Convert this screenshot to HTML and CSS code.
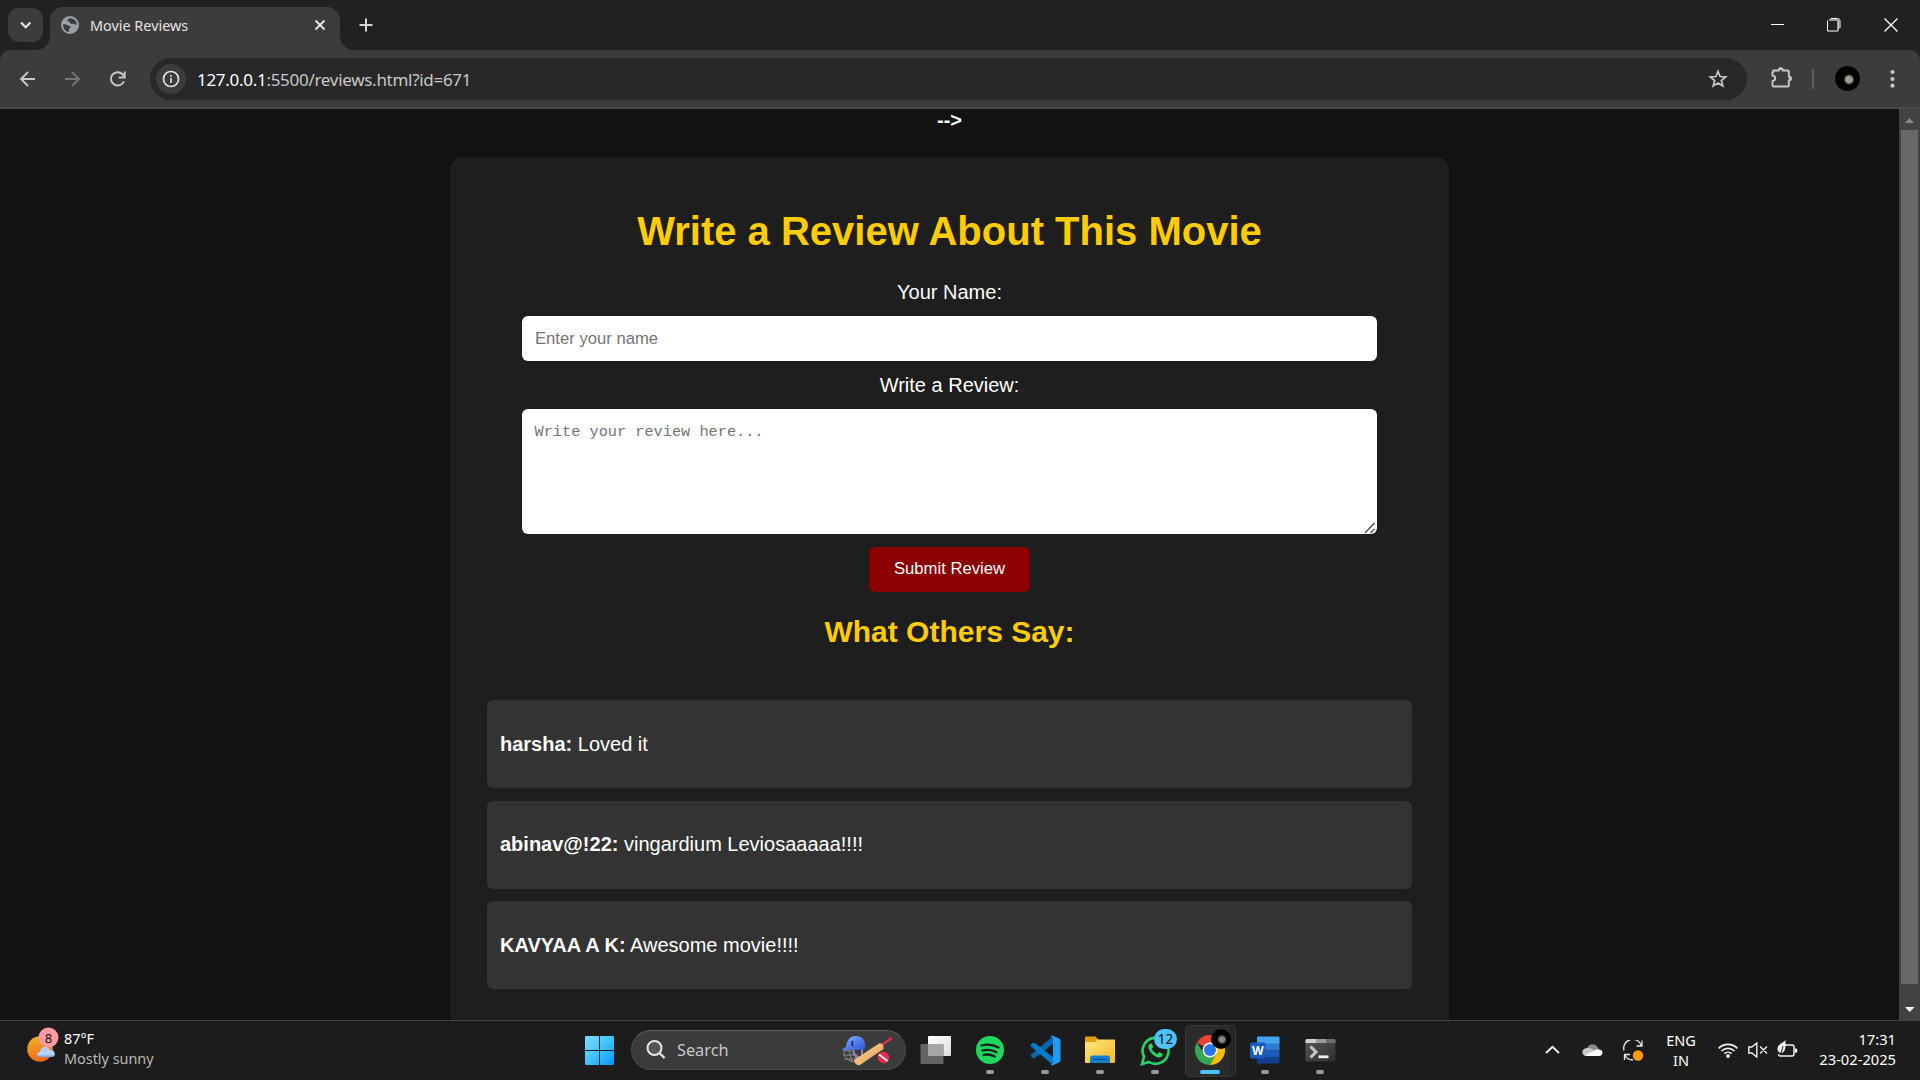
FILE: index.html
```html
<!DOCTYPE html>
<html lang="en">
<head>
<meta charset="utf-8">
<title>Movie Reviews</title>
<link rel="stylesheet" href="styles.css">
</head>
<body>
<header class="tabstrip">
  <div class="tab-search"><svg width="35" height="34"><path d="M13 14.5l4.7 4.7 4.7-4.7" fill="none" stroke="#e3e3e3" stroke-width="2.2"/></svg></div>
  <div class="tab">
    <svg width="18" height="18" viewBox="0 0 18 18"><circle cx="9" cy="9" r="9" fill="#9aa0a6"/><path d="M2 8.200c2 .2 3.500 0 5 1.200 1 .9 2.600.3 2.800 1.600.2 1-1.800 1-1.800 2.200v2.800C5 15.700 2 13 2 8.200zM8.600 2.200C7.500 3 6 3.500 6.600 5c.4 1 2 .3 2.400 1.300.4 1 .4 1.700 1.700 1.600 1.500-.1 2-.5 3 .2.8.6 1.400 1.300 2 1.200.6-3.500-2.500-7.300-7.100-7.100z" fill="#3c3c3c"/></svg>
    <span class="tab-title">Movie Reviews</span>
    <svg class="tab-close" width="12" height="12"><path d="M1.500 1.500l9 9m0-9l-9 9" stroke="#e3e3e3" stroke-width="1.900"/></svg>
  </div>
  <svg class="new-tab" width="14" height="14"><path d="M7 .5v13M.5 7h13" stroke="#d5d5d5" stroke-width="2"/></svg>
  <div class="window-buttons">
    <svg width="13" height="14"><path d="M0 6.500h13" stroke="#fff"/></svg>
    <svg width="14" height="14"><path d="M3.500 .5h7q2.500 0 2.500 2.500v7" fill="none" stroke="#fff"/><path d="M2 2h9.500v9" fill="none" stroke="#999" stroke-width="2"/><rect x=".5" y="3" width="10" height="10" fill="#202221"/><path d="M.5 2.500v10.500h10.500V3" fill="none" stroke="#fff"/></svg>
    <svg width="14" height="14"><path d="M.5.500l13 13m0-13l-13 13" stroke="#fff" stroke-width="1.300"/></svg>
  </div>
</header>

<nav class="toolbar">
  <svg class="nav-icon" width="45" height="42"><path d="M35 21H21.500M28 14l-7 7 7 7" fill="none" stroke="#c7c7c7" stroke-width="1.900"/></svg>
  <svg class="nav-icon" width="45" height="42"><path d="M20 21h13.500M27 14l7 7-7 7" fill="none" stroke="#777" stroke-width="1.900"/></svg>
  <svg class="nav-icon" width="45" height="42"><path d="M33.900 23.300A6.700 6.700 0 1 1 32.300 16l2 2.200M34.700 13.500v6h-6" fill="none" stroke="#c7c7c7" stroke-width="2"/></svg>
  <div class="omnibox">
    <div class="site-info"><svg width="18" height="18"><circle cx="9" cy="9" r="7.500" fill="none" stroke="#dfdfdf" stroke-width="1.700"/><path d="M9 8v5M9 5v1.800" stroke="#dfdfdf" stroke-width="1.700"/></svg></div>
    <span class="url"><span class="host">127.0.0.1</span>:5500/reviews.html?id=671</span>
    <svg class="star" width="20" height="20"><path d="M10 2.300l2.100 5.200 5.600.4-4.300 3.600 1.400 5.500L10 14l-4.800 3 1.400-5.500-4.300-3.600 5.600-.4z" fill="none" stroke="#c7c7c7" stroke-width="1.700"/></svg>
  </div>
  <svg class="puzzle" width="23" height="23"><path d="M3.500 4.500h5.300a2 2 0 0 1 4 0h5q1 0 1 1v5a2 2 0 0 1 0 4v5q0 1-1 1H3.500q-1 0-1-1v-4.500c3.600-.5 3.600-5 0-5.500v-3q0-1 1-1z" fill="none" stroke="#c7c7c7" stroke-width="1.900"/><path d="M8 4a2.700 2.700 0 0 1 5.400 0M19 9.700a2.700 2.700 0 0 1 0 5.400" fill="#c7c7c7"/></svg>
  <span class="divider"></span>
  <span class="avatar"></span>
  <svg class="menu-dots" width="5" height="20" fill="#c7c7c7"><circle cx="2.500" cy="3" r="2.100"/><circle cx="2.500" cy="10" r="2.100"/><circle cx="2.500" cy="16.700" r="2.100"/></svg>
</nav>

<div class="viewport">
  <main class="page">
    <div class="stray">--&gt;</div>
    <section class="panel">
      <h1>Write a Review About This Movie</h1>
      <form class="review-form">
        <label for="name">Your Name:</label>
        <input id="name" type="text" placeholder="Enter your name">
        <label for="review">Write a Review:</label>
        <div class="textarea-wrap">
          <textarea id="review" placeholder="Write your review here..."></textarea>
          <svg class="grip" width="12" height="12"><path d="M1 11L10.500 1M6.500 11l4-4" stroke="#555" stroke-width="1.500"/></svg>
        </div>
        <button type="button">Submit Review</button>
      </form>
      <h2>What Others Say:</h2>
      <div class="reviews">
        <p class="review"><strong>harsha:</strong> Loved it</p>
        <p class="review"><strong>abinav@!22:</strong> vingardium Leviosaaaaa!!!!</p>
        <p class="review"><strong>KAVYAA A K:</strong> Awesome movie!!!!</p>
      </div>
    </section>
  </main>
  <div class="scrollbar">
    <svg width="21" height="21"><path d="M6 14l4.500-5 4.500 5z" fill="#868686"/></svg>
    <div class="thumb"></div>
    <svg width="21" height="21"><path d="M6 8h9.500l-4.750 5z" fill="#fff"/></svg>
  </div>
</div>

<footer class="taskbar">
  <div class="weather">
    <svg width="34" height="40" viewBox="0 0 34 40">
      <defs><linearGradient id="sun" x1="0" y1="0" x2=".3" y2="1"><stop offset="0" stop-color="#f2b42e"/><stop offset="1" stop-color="#f26b12"/></linearGradient>
      <linearGradient id="cloud" x1="0" y1="0" x2="0" y2="1"><stop offset="0" stop-color="#a9c8fa"/><stop offset=".7" stop-color="#b9d6ff"/><stop offset="1" stop-color="#6e9df0"/></linearGradient></defs>
      <circle cx="14" cy="23" r="12.800" fill="url(#sun)"/><path d="M14 31c-3.500 0-4-5 0-5 .5-6 8-7 10-2 5-1 7 7 2 7z" fill="url(#cloud)"/><circle cx="22.500" cy="11.500" r="10" fill="#ff99a4"/>
      <text x="22.500" y="16.500" text-anchor="middle" class="badge-text">8</text>
    </svg>
    <div class="weather-text"><span class="temp">87°F</span><span class="cond">Mostly sunny</span></div>
  </div>

  <svg class="start" width="29" height="29"><defs><linearGradient id="win" gradientUnits="userSpaceOnUse" x1="0" y1="0" x2="29" y2="29"><stop offset="0" stop-color="#7fdcff"/><stop offset=".5" stop-color="#3fc4fb"/><stop offset="1" stop-color="#0a93f5"/></linearGradient></defs><path d="M1 0h13v14H0V1q0-1 1-1zM15 0h13q1 0 1 1v13H15zM0 15h14v14H1q-1 0-1-1zM15 15h14v13q0 1-1 1H15z" fill="url(#win)"/></svg>

  <div class="search">
    <svg width="20" height="20"><circle cx="8.500" cy="8" r="7" fill="#555" stroke="#e6e6e6" stroke-width="2"/><path d="M13.500 13l5 5.200" stroke="#ddd" stroke-width="2.400"/></svg>
    <span class="search-label">Search</span>
    <svg class="cricket" width="51" height="32" viewBox="0 0 51 32">
      <defs><linearGradient id="hel" x1="0" y1="0" x2="1" y2="1"><stop offset="0" stop-color="#9dbcff"/><stop offset=".5" stop-color="#5580f0"/><stop offset="1" stop-color="#2c55dd"/></linearGradient><linearGradient id="bat" x1="0" y1="0" x2="1" y2="1"><stop offset="0" stop-color="#ffd79b"/><stop offset="1" stop-color="#e29a4c"/></linearGradient></defs>
      <path d="M3 16c-1 7 4 12 13 12M2 21h15M3 25h14M8 16l3 12M13 17l3 11M4 17l7-1" fill="none" stroke="#8b8b93" stroke-width="1"/>
      <path d="M12 15c0 6 3 9 9 9V13" fill="none" stroke="#8c86bd" stroke-width="2"/>
      <path d="M1 16c1-2 3-2 4-3C6 5 10 2 15 2c7 0 10 5 9 13l-7 1-9-.5C5 15.500 3 17 1 16z" fill="url(#hel)"/><path d="M12 7q-2 2 0 5" stroke="#202040" stroke-width="1.500" fill="none"/>
      <path d="M42 10l8-5.500" stroke="#d93248" stroke-width="2.600" stroke-linecap="round"/>
      <path d="M13 26L38 9.500q3-1 4.500 2.500v3L19 31q-5 1-6-5z" fill="url(#bat)"/>
      <circle cx="42.500" cy="23.500" r="5.700" fill="#ee2849"/><path d="M38 20.500l8.500 6.500" stroke="#ffe9ee" stroke-width="2.200"/>
    </svg>
  </div>

  <div class="apps">
    <div class="app"><svg width="31" height="30"><defs><linearGradient id="tv" x1="0" y1="0" x2="1" y2="1"><stop offset="0" stop-color="#fff"/><stop offset="1" stop-color="#ddd"/></linearGradient></defs><rect x="8" y="1" width="23" height="20" rx="1" fill="url(#tv)"/><rect x=".5" y="9" width="23" height="20" rx="1" fill="#777" fill-opacity=".8"/><path d="M8 9h15.500v12H8z" fill="#a5a5a5"/></svg></div>
    <div class="app"><svg width="30" height="30"><circle cx="15" cy="15" r="14" fill="#1ed760"/><path d="M6.500 10.500q9-2.500 17 2M7.500 15.500q7.500-2 14 1.700M8.500 20q6-1.500 11.200 1.500" fill="none" stroke="#1c1c1c" stroke-width="2.300" stroke-linecap="round"/></svg><i class="run"></i></div>
    <div class="app"><svg width="31" height="31" viewBox="0 0 31 31"><path d="M1 19.500q-1 1 0 2l1.800 1.600q1 .5 2 0L23 9V1z" fill="#0065a9"/><path d="M1 9.500l1.800-1.600q1-.5 2 0L23 22v8L1 11.500q-1-1 0-2z" fill="#007acc"/><path d="M22.500.600q-1.500.4-2.500 1.400 3-1 3 2v23q0 3-3 2 1 1 2.500 1.400L29 27.500q1.500-.7 1.500-2.300V5.800q0-1.600-1.500-2.300z" fill="#1f9cf0"/></svg><i class="run"></i></div>
    <div class="app"><svg width="31" height="28"><defs><linearGradient id="fold" x1="0" y1="0" x2="1" y2="1"><stop offset="0" stop-color="#ffe489"/><stop offset="1" stop-color="#fbb91d"/></linearGradient></defs><path d="M0 10V1.500Q0 .500 1 .500h9.500L14 4h14v6z" fill="#e0a008"/><path d="M0 6h10l3-2.500h16.500q.5 0 .5 1V26q0 1-1 1H1q-1 0-1-1z" fill="url(#fold)"/><path d="M5 27v-5q0-2.500 2.500-2.500h15Q25 19.500 25 22v5z" fill="#1280d0"/><path d="M8.500 23.300h13" stroke="#0b4d84" stroke-width="1.300" stroke-linecap="round"/></svg><i class="run"></i></div>
    <div class="app"><svg width="31" height="31"><path d="M2 29l2-7.300A13 13 0 1 1 9 27z" fill="none" stroke="#25d366" stroke-width="2.600"/><path d="M10.500 8.500q-3 1.500-2 5 2.500 6.500 9.500 9 4 .5 5-3.500l-3.800-2-1.900 2.200q-3.800-1.600-5.600-5.200l1.600-2-1.500-3.500z" fill="#25d366"/></svg><b class="count">12</b><i class="run"></i></div>
    <div class="app active"><svg width="30" height="30" viewBox="-15 -15 30 30"><path d="M0 0L-13-7.500A15 15 0 0 1 13-7.500H0z" fill="#ea4335"/><path d="M-13-7.500A15 15 0 0 0 0 15L6.500 3.700-6.500 3.700z" fill="#34a853"/><path d="M13-7.500A15 15 0 0 1 0 15L6.500 3.700 0-7.500z" fill="#fbbc05"/><circle r="7.500" fill="#fff"/><circle r="6" fill="#2c75e8"/></svg><span class="profile"></span><i class="run wide"></i></div>
    <div class="app"><svg width="30" height="28"><path d="M8 .5h20q1.500 0 1.500 1V8H7V1.500q0-1 1-1z" fill="#41a5ee"/><path d="M7 7.500h22.500v7H7z" fill="#2b7cd3"/><path d="M7 14.500h22.500v7H7z" fill="#185abd"/><path d="M7 21.500h22.500v5q0 1-1 1H8q-1 0-1-1z" fill="#103f91"/><rect x="0" y="6.500" width="15.500" height="16" rx="1.500" fill="#185abd"/><text x="7.750" y="18.800" text-anchor="middle" class="word-letter">W</text></svg><i class="run"></i></div>
    <div class="app"><svg width="31" height="24"><defs><linearGradient id="term" x1="0" y1="0" x2="1" y2="1"><stop offset="0" stop-color="#585858"/><stop offset="1" stop-color="#2f2f2f"/></linearGradient></defs><rect x=".5" y="1" width="30" height="22.500" rx="1.500" fill="url(#term)"/><path d="M2 1h9v4H.500V2.500Q.5 1 2 1z" fill="#d0d0d0"/><path d="M11 1h10v4H11z" fill="#9b9b9b"/><path d="M21 1h8q1.500 0 1.500 1.500V5H21z" fill="#6d6d6d"/><path d="M5.500 8.500L11 14l-5.500 5.500" fill="none" stroke="#c6c6c6" stroke-width="3"/><path d="M13.500 18.800h10" stroke="#eee" stroke-width="2.800"/></svg><i class="run"></i></div>
  </div>

  <div class="tray">
    <svg width="15" height="10"><path d="M1 8l6.500-6.300L14 8" fill="none" stroke="#f2f2f2" stroke-width="1.900"/></svg>
    <svg class="onedrive" width="21" height="14"><path d="M5 6c1-5 8-7 11-1l2 3-8 3z" fill="#8b8b8b"/><path d="M4.500 13C-1 13-1.200 5.500 5 5q5-.5 7 3l-5 5z" fill="#c9c9c9"/><path d="M3 12.200L14 6.500c5-.5 7 1 6.300 4Q19.500 13 17 13H4.500z" fill="#fff"/></svg>
    <svg class="sync" width="21" height="21"><path d="M1 10.500A9 9 0 0 1 18.500 6M19 .500V6h-5.500M1.500 20v-5.500H7M2 15q2 5 8 5" fill="none" stroke="#e8e8e8" stroke-width="1.300"/><circle cx="15" cy="15.500" r="5.200" fill="#ff9a0a"/></svg>
    <div class="lang"><span>ENG</span><span>IN</span></div>
    <svg class="wifi" width="20" height="16"><path d="M.7 6.300a13 13 0 0 1 18.600 0M3.600 9a9 9 0 0 1 12.800 0M6.400 11.700a5.200 5.200 0 0 1 7.200 0" fill="none" stroke="#f2f2f2" stroke-width="1.700"/><circle cx="10" cy="14" r="1.900" fill="#f2f2f2"/></svg>
    <svg class="mute" width="20" height="16"><path d="M.8 5h3l5-4v14l-5-4h-3zM12 4.500l7 7m0-7l-7 7" fill="none" stroke="#f2f2f2" stroke-width="1.400"/></svg>
    <svg class="battery" width="21" height="18"><path d="M8 5h7q2 0 2 2v7q0 2-2 2H3.500q-1.800 0-2-2" fill="none" stroke="#f2f2f2" stroke-width="1.500"/><path d="M18 8.500h1q1.200 0 1.200 1.200v1.800q0 1.200-1.200 1.200h-1z" fill="#f2f2f2"/><path d="M8.500 0C9 8 8 13 4 13q-4-.5-3.500-4.500C1 4 5 4 8.500 0z" fill="#f2f2f2"/><path d="M6 6q-1 5-3 9" stroke="#1c1c1c" fill="none"/></svg>
    <div class="clock"><span>17:31</span><span class="date">23-02-2025</span></div>
  </div>
</footer>
</body>
</html>
```
FILE: styles.css
```css
* { box-sizing: border-box; }
body {
  margin: 0;
  width: 1920px;
  height: 1080px;
  overflow: hidden;
  display: flex;
  flex-direction: column;
  background: #202221;
  font-family: "Noto Sans", "Open Sans", sans-serif;
  color: #fff;
}
svg { display: block; flex: none; }

/* Browser tab strip */
.tabstrip { height: 50px; flex: none; display: flex; align-items: center; padding-left: 8px; }
.tab-search { width: 35px; height: 34px; border-radius: 11px; background: #3c3c3c; }
.tab {
  position: relative;
  align-self: flex-end;
  width: 290px;
  height: 43px;
  margin-left: 7px;
  padding: 0 14px 7px 11px;
  display: flex;
  align-items: center;
  background: #3c3c3c;
  border-radius: 13px 13px 0 0;
}
.tab::before, .tab::after { content: ""; position: absolute; bottom: 0; width: 13px; height: 13px; }
.tab::before { left: -13px; background: radial-gradient(circle at 0 0, transparent 12.5px, #3c3c3c 13px); }
.tab::after { right: -13px; background: radial-gradient(circle at 100% 0, transparent 12.5px, #3c3c3c 13px); }
.tab-title { margin-left: 11px; font-size: 14.4px; color: #e3e3e3; white-space: nowrap; }
.tab-close { margin-left: auto; }
.new-tab { margin-left: 19px; }
.window-buttons { margin: -1px 22px 0 auto; display: flex; gap: 43px; }

/* Toolbar */
.toolbar {
  height: 59px;
  flex: none;
  display: flex;
  align-items: center;
  background: #3c3c3c;
  border-bottom: 2px solid #4a4a4a;
  border-radius: 10px 10px 0 0;
}
.omnibox {
  width: 1597px;
  height: 42px;
  margin-left: 15px;
  padding: 0 19px 0 6px;
  display: flex;
  align-items: center;
  background: #282828;
  border-radius: 21px;
}
.site-info { width: 30px; height: 30px; border-radius: 50%; background: #3c3c3c; display: grid; place-items: center; }
.url { margin: 1px 0 0 11px; font-size: 17px; letter-spacing: -.29px; color: #c7c7c7; white-space: nowrap; }
.host { color: #fff; }
.star { margin-left: auto; }
.puzzle { margin-left: 23px; margin-top: -2px; }
.divider { width: 2px; height: 20px; margin-left: 19px; background: #5c5c5c; }
.avatar { width: 25px; height: 25px; margin-left: 21px; border-radius: 50%; background: radial-gradient(circle at 14px 13.5px, #a39a90 0 3px, #6b645c 4px, #000 5.500px); }
.menu-dots { margin-left: 29.500px; }

/* Page area */
.viewport { flex: 1; min-height: 0; display: flex; background: #121212; }
.page { flex: 1; height: 911px; overflow: hidden; font-family: "Liberation Sans", Arial, sans-serif; font-size: 20px; line-height: 23px; text-align: center; }
.stray { font-weight: 700; }
.panel { width: 999px; height: 900px; margin: 25px auto 0; padding: 51px 37px 0; background: #1e1e1e; border-radius: 12.500px; }
h1 { margin: 0; font-size: 40px; line-height: 46px; color: #fc0; }
.review-form { display: flex; flex-direction: column; align-items: center; padding: 27px 35px 0; }
.review-form label { height: 23px; }
.review-form input {
  width: 100%;
  height: 45px;
  margin: 12px 0 13px;
  padding: 0 13px;
  border: 0;
  border-radius: 6px;
  background: #fff;
  font: 16.670px "Liberation Sans", Arial, sans-serif;
}
::placeholder { color: #757575; }
.textarea-wrap { position: relative; width: 100%; height: 125px; margin: 12px 0 13px; }
.review-form textarea {
  display: block;
  width: 100%;
  height: 100%;
  padding: 13px 12.500px;
  border: 0;
  border-radius: 6px;
  resize: none;
  background: #fff;
  font: 15.270px/20px "Liberation Mono", monospace;
}
.grip { position: absolute; right: 1px; bottom: 0; }
.review-form button {
  width: 161px;
  height: 45px;
  padding: 0 0 2px;
  border: 0;
  border-radius: 6px;
  background: #8b0000;
  color: #fff;
  font: 16.670px "Liberation Sans", Arial, sans-serif;
}
h2 { margin: 23px 0 0; font-size: 30px; line-height: 34px; color: #fc0; }
.reviews { padding-top: 51px; display: flex; flex-direction: column; gap: 12.500px; }
.review { margin: 0; height: 88px; padding: 32.500px 13px; border-radius: 6px; background: #333; text-align: left; }
.scrollbar { width: 21px; height: 911px; background: #424242; display: flex; flex-direction: column; justify-content: space-between; align-items: center; }
.thumb { width: 17px; height: 854px; margin: 0 0 auto; background: #686868; }

/* Taskbar */
.taskbar { height: 60px; flex: none; display: flex; align-items: center; background: #1c1c1c; border-top: 1px solid #424242; padding-bottom: 1px; font-size: 15px; }
.weather { width: 559px; padding-left: 26px; display: flex; align-items: flex-start; height: 58px; padding-top: 5px; }
.badge-text { font-size: 13px; fill: #111; }
.weather-text { display: flex; flex-direction: column; margin: 3px 0 0 4px; line-height: 20px; font-size: 14.400px; }
.cond { color: #b8b8b8; }
.start { margin-left: 26px; }
.search { width: 275px; height: 40px; margin-left: 17px; padding: 0 14px; display: flex; align-items: center; border-radius: 20px; background: #3b3b3b; border: 1px solid #494949; border-top-color: #626262; }
.search-label { margin-left: 11px; font-size: 16.300px; color: #c9c9c9; }
.cricket { margin-left: auto; margin-right: -1px; }
.apps { display: flex; margin-left: 2px; }
.app { position: relative; width: 55px; height: 50px; display: flex; align-items: center; justify-content: center; }
.apps .app > svg { margin-left: -1px; }
.active::before { content: ""; position: absolute; left: 2px; top: 0; width: 45px; height: 50px; border: 1px solid #383838; border-radius: 5px; background: #2b2b2b; }
.active::after { content: ""; position: absolute; left: 40px; top: 0; width: 12px; height: 50px; border: 1px solid #383838; border-left: 0; border-radius: 0 5px 5px 0; background: #252525; clip-path: inset(0 0 0 7px); }
.active svg { position: relative; }
.run { position: absolute; left: 23px; bottom: 1px; width: 8px; height: 4px; border-radius: 2px; background: #9a9a9a; }
.run.wide { left: 17px; width: 20px; background: #4cc2ff; }
.count { position: absolute; left: 26px; top: 4px; width: 23px; height: 20px; border-radius: 10px; background: #4cc2ff; color: #111; font-size: 13.500px; font-weight: 400; line-height: 20px; text-align: center; }
.profile { position: absolute; z-index: 1; left: 28px; top: 4px; width: 20px; height: 20px; border-radius: 50%; background: radial-gradient(circle at 11px 10.500px, #8e8780 0 2.500px, #000 5px); }
.word-letter { font: 700 12px "Open Sans", sans-serif; fill: #fff; }
.tray { margin-left: auto; padding-right: 24px; display: flex; align-items: center; line-height: 20px; }
.onedrive { margin-left: 22px; }
.sync { margin-left: 20px; }
.lang { width: 30px; margin: -1px 0 0 22px; display: flex; flex-direction: column; align-items: center; font-size: 14.500px; }
.wifi { margin-left: 22px; }
.mute { margin-left: 10px; }
.battery { margin-left: 9px; margin-top: -3px; }
.clock { width: 98px; display: flex; flex-direction: column; align-items: flex-end; font-size: 14.700px; margin-top: -2px; }
```
